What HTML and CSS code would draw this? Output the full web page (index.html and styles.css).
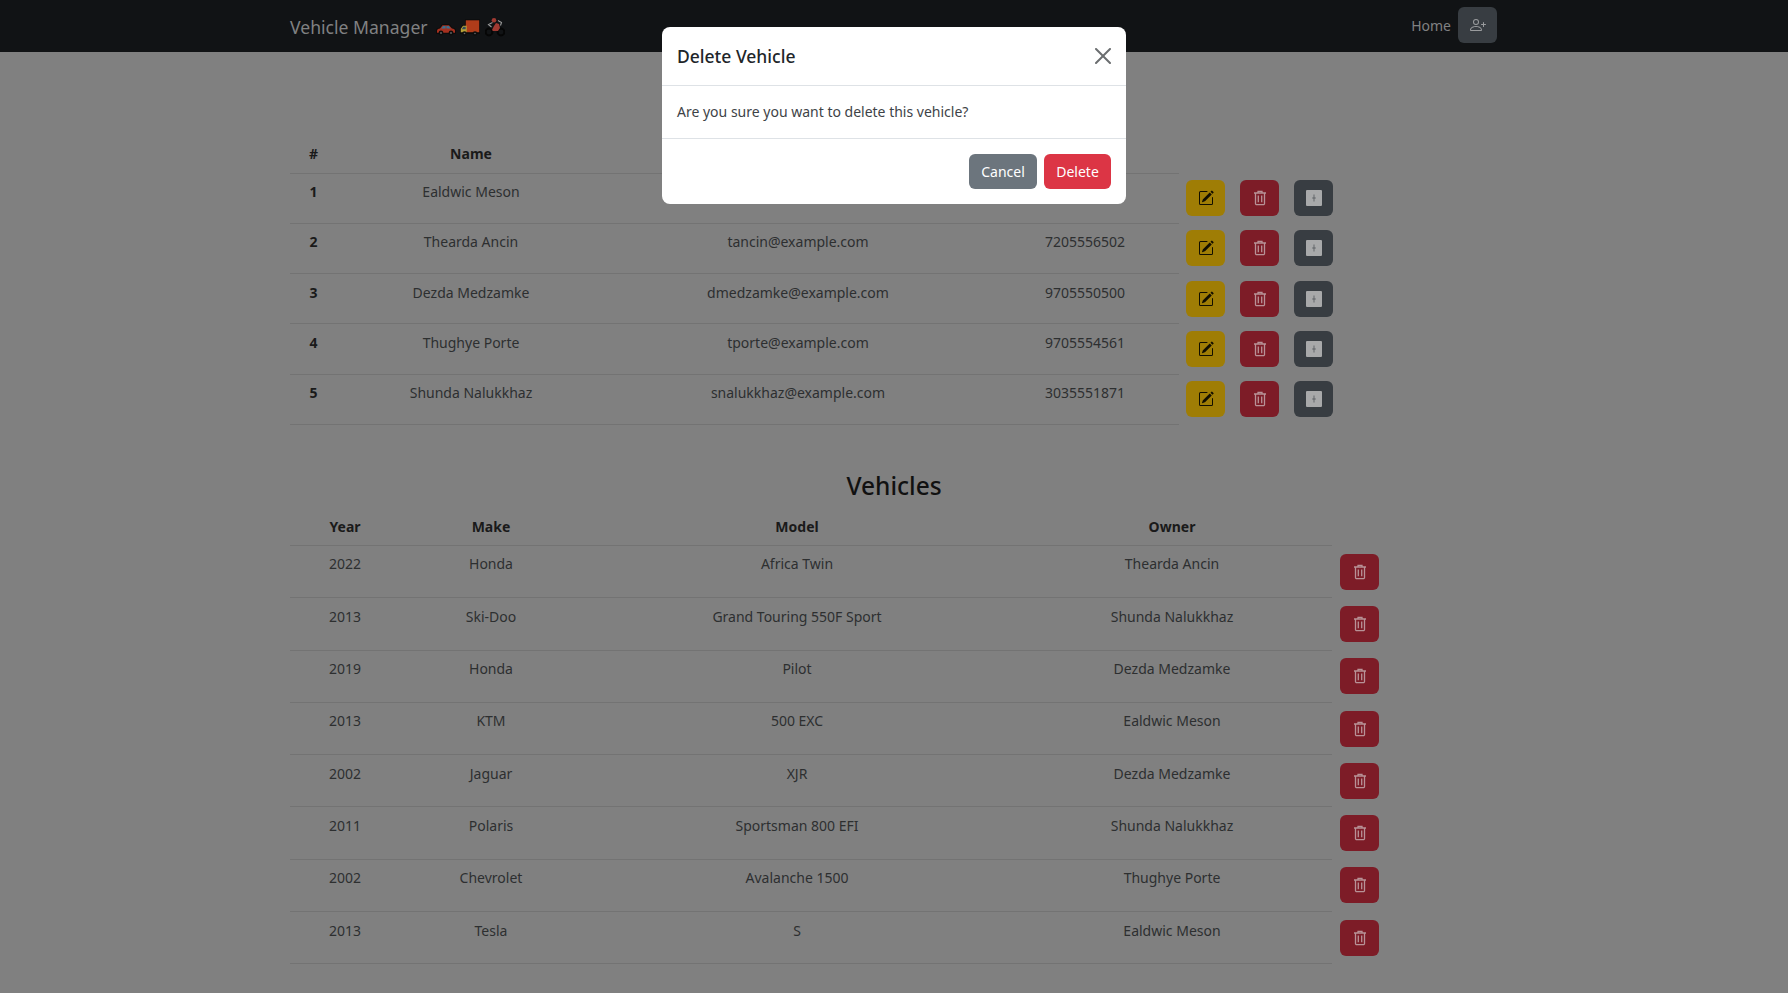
FILE: index.html
```html
<!DOCTYPE html>
<html lang="en">
<head>
<meta charset="utf-8">
<title>Vehicle Manager</title>
<link rel="stylesheet" href="styles.css">
</head>
<body>
<svg class="defs" width="0" height="0" aria-hidden="true">
  <symbol id="i-edit" viewBox="0 0 16 16"><path d="M15.502 1.94a.5.5 0 0 1 0 .706L14.459 3.69l-2-2L13.502.646a.5.5 0 0 1 .707 0l1.293 1.293zm-1.75 2.456-2-2L4.939 9.21a.5.5 0 0 0-.121.196l-.805 2.414a.25.25 0 0 0 .316.316l2.414-.805a.5.5 0 0 0 .196-.12l6.813-6.814z"/><path fill-rule="evenodd" d="M1 13.5A1.5 1.5 0 0 0 2.5 15h11a1.5 1.5 0 0 0 1.5-1.5v-6a.5.5 0 0 0-1 0v6a.5.5 0 0 1-.5.5h-11a.5.5 0 0 1-.5-.5v-11a.5.5 0 0 1 .5-.5H9a.5.5 0 0 0 0-1H2.5A1.5 1.5 0 0 0 1 2.5v11z"/></symbol>
  <symbol id="i-trash" viewBox="0 0 16 16"><path fill="none" stroke="currentColor" stroke-width="1.300" d="M2 3h12M6 3V1.300h4V3M3.500 3v10.500a1.200 1.200 0 0 0 1.200 1.200h6.600a1.200 1.200 0 0 0 1.200-1.200V3"/><path fill="none" stroke="currentColor" stroke-width="1.300" d="M6.300 5.500v6.700M9.700 5.500v6.700"/></symbol>
  <symbol id="i-box" viewBox="0 0 16 16"><path fill-rule="evenodd" d="M1 0h14a1 1 0 0 1 1 1v14a1 1 0 0 1-1 1H1a1 1 0 0 1-1-1V1a1 1 0 0 1 1-1zm6.700 4.500v7h.6V8.300h1.700v-.6H8.300V4.500h-.6zM6 7.700v.6h1.700v-.6H6z"/></symbol>
  <symbol id="i-user" viewBox="0 0 16 16"><path d="M6 8a3 3 0 1 0 0-6 3 3 0 0 0 0 6zm2-3a2 2 0 1 1-4 0 2 2 0 0 1 4 0zm4 8c0 1-1 1-1 1H1s-1 0-1-1 1-4 6-4 6 3 6 4zm-1-.004c-.001-.246-.154-.986-.832-1.664C9.516 10.680 8.289 10 6 10c-2.290 0-3.516.68-4.168 1.332-.678.678-.830 1.418-.832 1.664h10z"/><path fill-rule="evenodd" d="M13.500 5a.5.5 0 0 1 .5.5V7h1.500a.5.5 0 0 1 0 1H14v1.500a.5.5 0 0 1-1 0V8h-1.500a.5.5 0 0 1 0-1H13V5.500a.5.5 0 0 1 .5-.5z"/></symbol>
</svg>

<nav class="navbar">
  <div class="brand">
    <span>Vehicle Manager</span>
    <svg class="emoji" viewBox="0 0 20 20"><path fill="#0b0b0b" d="M0 14c0-2 1-2.800 3.500-3.200L6 7.200h7.500l3 3.500c2.300.4 3.500 1 3.500 3v3H0z"/><path fill="#a5301f" d="M1 14c0-1.500 1-2.100 3-2.400l2.500-3.400h6.500l3 3.400c2 .3 3 .9 3 2.400v1.800H1z"/><path fill="#3d6f8f" d="M7 9h2.600v2.500H5.200zM10.400 9h2.300l2.200 2.500h-4.500z"/><circle cx="5" cy="16" r="2.400" fill="#0d0d0d"/><circle cx="15" cy="16" r="2.400" fill="#0d0d0d"/><circle cx="5" cy="16" r=".9" fill="#666"/><circle cx="15" cy="16" r=".9" fill="#666"/></svg>
    <svg class="emoji" viewBox="0 0 20 20"><path fill="#0b0b0b" d="M0 11.500 2.500 8H5V2.500h15V17H0z"/><path fill="#b03c1a" d="M5.800 3.300h13.400v11.900H5.800z"/><path fill="#b5a038" d="M.8 11.800 3 8.800h3.700v6.400H.8z"/><path fill="#2f4c5e" d="M3.300 9.700h2.400v2.500H1.800z"/><circle cx="4.500" cy="16.500" r="2.300" fill="#0d0d0d"/><circle cx="15" cy="16.500" r="2.300" fill="#0d0d0d"/><circle cx="4.500" cy="16.500" r=".8" fill="#666"/><circle cx="15" cy="16.500" r=".8" fill="#666"/></svg>
    <svg class="emoji" viewBox="0 0 20 20"><circle cx="4" cy="15" r="3.400" fill="none" stroke="#060606" stroke-width="2"/><circle cx="16" cy="15" r="3.400" fill="none" stroke="#060606" stroke-width="2"/><path fill="#a03a32" d="M7 13l2-4 2-3 3 1L15 11l-2 3H8z"/><circle cx="9" cy="3.300" r="2.300" fill="#a03a32"/><path fill="none" stroke="#9a9a9a" stroke-width="1.100" d="M7.500 5.500 3.500 7.500l3 2.500M13 3.500l3.500 2-1 3"/></svg>
  </div>
  <div class="nav-right">
    <a class="nav-link">Home</a>
    <button class="icon-btn btn-dim-secondary"><svg class="icon"><use href="#i-user"/></svg></button>
  </div>
</nav>

<main class="container">
  <section class="owners">
    <table class="table owners-table">
      <thead><tr><th class="c-num">#</th><th class="c-name">Name</th><th class="c-email"></th><th class="c-phone"></th><th class="c-actions"></th></tr></thead>
      <tbody>
        <tr><th>1</th><td>Ealdwic Meson</td><td></td><td></td><td class="actions"><div class="action-group"><button class="icon-btn btn-dim-warning"><svg class="icon"><use href="#i-edit"/></svg></button><button class="icon-btn btn-dim-danger"><svg class="icon"><use href="#i-trash"/></svg></button><button class="icon-btn btn-dim-secondary"><svg class="icon box"><use href="#i-box"/></svg></button></div></td></tr>
        <tr><th>2</th><td>Thearda Ancin</td><td>tancin@example.com</td><td>7205556502</td><td class="actions"><div class="action-group"><button class="icon-btn btn-dim-warning"><svg class="icon"><use href="#i-edit"/></svg></button><button class="icon-btn btn-dim-danger"><svg class="icon"><use href="#i-trash"/></svg></button><button class="icon-btn btn-dim-secondary"><svg class="icon box"><use href="#i-box"/></svg></button></div></td></tr>
        <tr><th>3</th><td>Dezda Medzamke</td><td>dmedzamke@example.com</td><td>9705550500</td><td class="actions"><div class="action-group"><button class="icon-btn btn-dim-warning"><svg class="icon"><use href="#i-edit"/></svg></button><button class="icon-btn btn-dim-danger"><svg class="icon"><use href="#i-trash"/></svg></button><button class="icon-btn btn-dim-secondary"><svg class="icon box"><use href="#i-box"/></svg></button></div></td></tr>
        <tr><th>4</th><td>Thughye Porte</td><td>tporte@example.com</td><td>9705554561</td><td class="actions"><div class="action-group"><button class="icon-btn btn-dim-warning"><svg class="icon"><use href="#i-edit"/></svg></button><button class="icon-btn btn-dim-danger"><svg class="icon"><use href="#i-trash"/></svg></button><button class="icon-btn btn-dim-secondary"><svg class="icon box"><use href="#i-box"/></svg></button></div></td></tr>
        <tr><th>5</th><td>Shunda Nalukkhaz</td><td>snalukkhaz@example.com</td><td>3035551871</td><td class="actions"><div class="action-group"><button class="icon-btn btn-dim-warning"><svg class="icon"><use href="#i-edit"/></svg></button><button class="icon-btn btn-dim-danger"><svg class="icon"><use href="#i-trash"/></svg></button><button class="icon-btn btn-dim-secondary"><svg class="icon box"><use href="#i-box"/></svg></button></div></td></tr>
      </tbody>
    </table>
  </section>

  <section class="vehicles">
    <h2 class="heading">Vehicles</h2>
    <table class="table vehicles-table">
      <thead><tr><th class="c-year">Year</th><th class="c-make">Make</th><th class="c-model">Model</th><th class="c-owner">Owner</th><th class="c-del"></th></tr></thead>
      <tbody>
        <tr><td>2022</td><td>Honda</td><td>Africa Twin</td><td>Thearda Ancin</td><td class="actions"><button class="icon-btn btn-dim-danger"><svg class="icon"><use href="#i-trash"/></svg></button></td></tr>
        <tr><td>2013</td><td>Ski-Doo</td><td>Grand Touring 550F Sport</td><td>Shunda Nalukkhaz</td><td class="actions"><button class="icon-btn btn-dim-danger"><svg class="icon"><use href="#i-trash"/></svg></button></td></tr>
        <tr><td>2019</td><td>Honda</td><td>Pilot</td><td>Dezda Medzamke</td><td class="actions"><button class="icon-btn btn-dim-danger"><svg class="icon"><use href="#i-trash"/></svg></button></td></tr>
        <tr><td>2013</td><td>KTM</td><td>500 EXC</td><td>Ealdwic Meson</td><td class="actions"><button class="icon-btn btn-dim-danger"><svg class="icon"><use href="#i-trash"/></svg></button></td></tr>
        <tr><td>2002</td><td>Jaguar</td><td>XJR</td><td>Dezda Medzamke</td><td class="actions"><button class="icon-btn btn-dim-danger"><svg class="icon"><use href="#i-trash"/></svg></button></td></tr>
        <tr><td>2011</td><td>Polaris</td><td>Sportsman 800 EFI</td><td>Shunda Nalukkhaz</td><td class="actions"><button class="icon-btn btn-dim-danger"><svg class="icon"><use href="#i-trash"/></svg></button></td></tr>
        <tr><td>2002</td><td>Chevrolet</td><td>Avalanche 1500</td><td>Thughye Porte</td><td class="actions"><button class="icon-btn btn-dim-danger"><svg class="icon"><use href="#i-trash"/></svg></button></td></tr>
        <tr><td>2013</td><td>Tesla</td><td>S</td><td>Ealdwic Meson</td><td class="actions"><button class="icon-btn btn-dim-danger"><svg class="icon"><use href="#i-trash"/></svg></button></td></tr>
      </tbody>
    </table>
  </section>
</main>

<div class="modal-backdrop">
  <div class="modal">
    <header class="modal-header">
      <h5 class="modal-title">Delete Vehicle</h5>
      <svg class="close" viewBox="0 0 16 16"><path d="M.293.293a1 1 0 0 1 1.414 0L8 6.586 14.293.293a1 1 0 1 1 1.414 1.414L9.414 8l6.293 6.293a1 1 0 0 1-1.414 1.414L8 9.414l-6.293 6.293a1 1 0 0 1-1.414-1.414L6.586 8 .293 1.707a1 1 0 0 1 0-1.414z"/></svg>
    </header>
    <div class="modal-body">Are you sure you want to delete this vehicle?</div>
    <footer class="modal-footer">
      <button class="btn btn-secondary btn-cancel">Cancel</button>
      <button class="btn btn-danger">Delete</button>
    </footer>
  </div>
</div>
</body>
</html>
```
FILE: styles.css
```css
* { box-sizing: border-box; }
html, body { margin: 0; height: 100%; }
body {
  background: #808080;
  color: #111;
  font-family: "Noto Sans", "Open Sans", sans-serif;
  font-size: 14px;
  line-height: 24px;
  overflow: hidden;
}
.defs { position: absolute; }
.navbar {
  height: 52px;
  background: #111315;
  padding: 0 291px 0 290px;
  display: flex;
  align-items: center;
  justify-content: space-between;
}
.brand { display: flex; align-items: center; color: #808182; font-size: 17.6px; padding-top: 2px; }
.emoji { width: 20px; height: 20px; margin-left: 4.5px; }
.emoji:first-of-type { margin-left: 8px; }
.nav-right { display: flex; align-items: center; gap: 7px; }
.nav-link { color: #808182; font-size: 14px; }
.nav-right .icon-btn { margin-bottom: 2px; }
.icon-btn {
  width: 39px;
  height: 36px;
  border: 0;
  border-radius: 6px;
  padding: 0;
  display: inline-flex;
  align-items: center;
  justify-content: center;
}
.icon { width: 16px; height: 16px; fill: currentColor; }
.icon.box { fill: #a8a9aa; }
.btn-dim-warning { background: #9f7d05; color: #120f00; }
.btn-dim-danger { background: #7d1c27; color: #b89297; }
.btn-dim-secondary { background: #383d42; color: #9a9c9e; }

.container { padding: 0 290px; }
.owners { padding-top: 83px; }
.table { border-collapse: collapse; table-layout: fixed; text-align: center; }
.table th { font-weight: 700; }
.table th, .table td { padding: 6.5px 0 0; vertical-align: top; }
.table thead th { height: 38px; padding-top: 7px; color: #1a1a1a; }
.table tbody td { color: #2d2f30; }
.table tbody th { color: #1a1a1a; }
.table thead tr, .table tbody tr { border-bottom: 1px solid #737373; }
.table thead th:last-child, .table .actions { border-bottom: 1px solid #808080; padding: 0 0 0 7px; vertical-align: middle; }

.owners-table { width: 1096px; }
.owners-table tbody tr { height: 50.3px; }
.c-num { width: 47px; }
.c-name { width: 268px; }
.c-email { width: 386px; }
.c-phone { width: 188px; }
.c-actions { width: 207px; }
.action-group { display: flex; gap: 15px; }

.vehicles { padding-top: 44px; }
.heading {
  margin: 0;
  text-align: center;
  font-weight: 500;
  font-size: 24.5px;
  line-height: 34px;
  color: #111;
  padding-bottom: 5.5px;
}
.vehicles-table { width: 1090px; }
.vehicles-table thead th { height: 37px; }
.vehicles-table tbody tr { height: 52.3px; }
.c-year { width: 110px; }
.c-make { width: 182px; }
.c-model { width: 430px; }
.c-owner { width: 320px; }
.c-del { width: 48px; }

.modal-backdrop { position: fixed; inset: 0; }
.modal {
  position: absolute;
  left: 662px;
  top: 27px;
  width: 464px;
  background: #fff;
  border-radius: 8px;
  color: #212529;
}
.modal-header {
  height: 59px;
  padding: 0 15px;
  display: flex;
  align-items: center;
  justify-content: space-between;
  border-bottom: 1px solid #dee2e6;
}
.modal-title { margin: 0; font-size: 17.5px; font-weight: 500; line-height: 24px; }
.close { width: 16px; height: 16px; fill: #6b6e70; }
.modal-body { height: 53px; padding: 14px 15px; font-size: 14px; color: #3e4347; border-bottom: 1px solid #dee2e6; }
.modal-footer { height: 65px; padding: 15px; display: flex; justify-content: flex-end; gap: 7px; }
.btn {
  width: 67px;
  height: 35px;
  border: 0;
  border-radius: 6px;
  color: #fff;
  font: inherit;
  font-size: 14px;
}
.btn-cancel { width: 68px; }
.btn-secondary { background: #6c757d; }
.btn-danger { background: #dc3545; }
```
